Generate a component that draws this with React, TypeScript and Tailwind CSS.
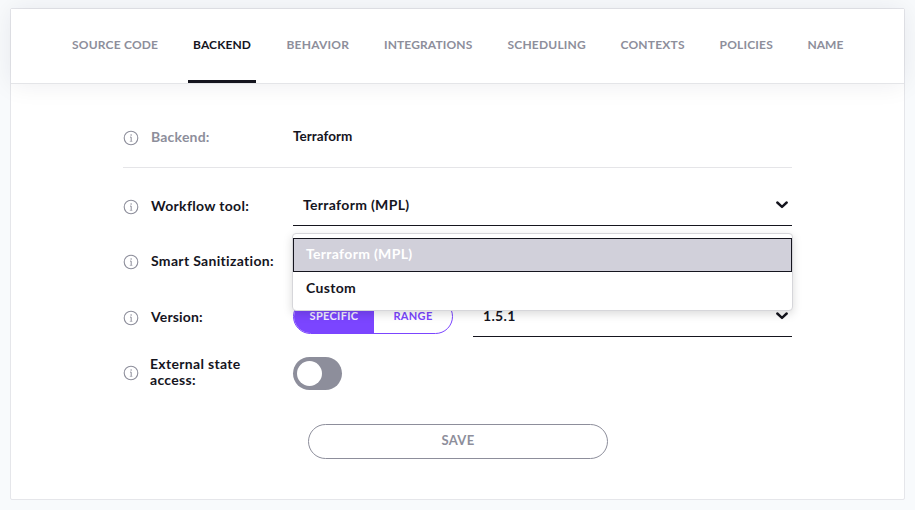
import type { ReactNode } from "react";

const tabs = [
  { name: "SOURCE CODE", width: "w-[86px]", spacing: "tracking-[0.2px]" },
  { name: "BACKEND", width: "w-[58.5px]", spacing: "tracking-[0.12px]" },
  { name: "BEHAVIOR", width: "w-[62.5px]", spacing: "tracking-[0.2px]" },
  { name: "INTEGRATIONS", width: "w-[88.5px]", spacing: "tracking-[0.12px]" },
  { name: "SCHEDULING", width: "w-[78px]", spacing: "tracking-[0.2px]" },
  { name: "CONTEXTS", width: "w-[64px]", spacing: "tracking-[0.2px]" },
  { name: "POLICIES", width: "w-[53px]", spacing: "tracking-[0.2px]" },
  { name: "NAME", width: "w-[36px]", spacing: "tracking-[0px]" },
];

function Info() {
  return (
    <svg className="h-4 w-4 shrink-0" viewBox="0 0 16 16" fill="none" stroke="#8d8e9b">
      <circle cx="8" cy="8" r="6.8" strokeWidth="1.1" />
      <path d="M7 7.1h1.2v4.2" strokeWidth="1" />
      <path d="M6.8 11.4h2.6" strokeWidth="0.6" />
      <circle cx="8.1" cy="4.9" r="0.75" fill="#8d8e9b" stroke="none" />
    </svg>
  );
}

function Chevron() {
  return (
    <svg className="mr-1 mb-[3px] h-2 w-3" viewBox="0 0 12 8" fill="none" stroke="#15151e" strokeWidth="2.4" strokeLinecap="round" strokeLinejoin="round">
      <path d="M1.3 1.5 6 5.9l4.7-4.4" />
    </svg>
  );
}

function Row({ label, className, labelClass = "ml-3 w-[142px] pb-[3px]", children }: { label: ReactNode; className: string; labelClass?: string; children?: ReactNode }) {
  return (
    <div className={`flex items-center ${className}`}>
      <Info />
      <div className={`shrink-0 whitespace-nowrap ${labelClass}`}>{label}</div>
      {children}
    </div>
  );
}

export default function App() {
  return (
    <div className="h-[510px] w-[915px] overflow-hidden bg-[#f8fafc] px-[10px] pt-2 font-['Lato',sans-serif] text-[14px] font-bold tracking-[0.32px] text-[#15151e]">
      <main className="h-[492px] w-[895px] rounded-[2px] border border-[#e5e6ea] bg-white">
        <nav className="flex h-[75px] gap-[35px] border-b border-[#e4e5e8] bg-white pl-[61px] text-[12px] text-[#8d8e9b] shadow-[0_0_26px_rgba(20,20,50,0.08)]">
          {tabs.map((tab) => (
            <div key={tab.name} className={`flex h-[74px] shrink-0 flex-col whitespace-nowrap ${tab.width}`}>
              <span className={`flex h-[71px] items-center ${tab.spacing} ${tab.name === "BACKEND" ? "text-[#15151e]" : ""}`}>{tab.name}</span>
              {tab.name === "BACKEND" && <span className="-mr-[4.5px] -ml-[5px] h-[3px] bg-[#15151e]" />}
            </div>
          ))}
        </nav>

        <section className="ml-[112px] w-[669px]">
          <div className="h-[84px] border-b border-[#e5e5e8] pt-[38px]">
            <Row className="h-8" label="Backend:" labelClass="ml-3 w-[142px] pb-[3px] tracking-[0.2px] text-[#8d8e9b]">
              <span className="pb-1 text-[13.5px] tracking-[0.02px]">Terraform</span>
            </Row>
          </div>

          <Row className="mt-[19px] h-[39px]" label="Workflow tool:">
            <div className="relative flex h-[39px] w-[499px] items-center justify-between border-b border-[#15151e] pl-[10px]">
              <span className="pb-[3px]">Terraform (MPL)</span>
              <Chevron />
              <div className="absolute top-[46px] -left-px z-10 h-[78px] w-[501px] rounded border border-[#d6d6da] bg-white pt-1 shadow-[0_3px_10px_rgba(0,0,0,0.15)]">
                <div className="flex h-[34px] w-[499px] items-center border border-[#15151e] bg-[#d1d0da] pb-[3px] pl-3 text-white">Terraform (MPL)</div>
                <div className="flex h-[33px] items-center pb-[2px] pl-[13px]">Custom</div>
              </div>
            </div>
          </Row>

          <Row className="mt-[16px] h-10" label="Smart Sanitization:" />

          <Row className="mt-[17px] h-[37px]" label="Version:" labelClass="ml-3 w-[142px] pb-[3px] tracking-[0.15px]">
            <div className="-mt-0.5 flex h-[35px] w-[160px] overflow-hidden rounded-full border border-[#7b45ff] text-[11px]">
              <span className="flex w-[80px] items-center justify-center bg-[#7b45ff] text-[#f1edff]">SPECIFIC</span>
              <span className="flex w-[78px] items-center justify-center text-[#7b45ff]">RANGE</span>
            </div>
            <div className="ml-5 flex h-[39px] w-[319px] items-center justify-between border-b border-[#15151e] pl-[10px]">
              <span className="pb-[3px]">1.5.1</span>
              <Chevron />
            </div>
          </Row>

          <Row className="mt-[20px] h-[33px]" label={<>External state<br />access:</>} labelClass="ml-[11px] w-[143px] pb-px leading-4">
            <div className="mt-0.5 flex h-[33px] w-[49px] items-center rounded-full bg-[#8d8e9b] pl-1">
              <span className="h-[25px] w-[25px] rounded-full bg-white" />
            </div>
          </Row>

          <button className="mt-[35px] ml-[185px] block h-[35px] w-[300px] rounded-full border border-[#8d8e9b] pb-[2px] text-[13px] text-[#8d8e9b]">SAVE</button>
        </section>
      </main>
    </div>
  );
}
